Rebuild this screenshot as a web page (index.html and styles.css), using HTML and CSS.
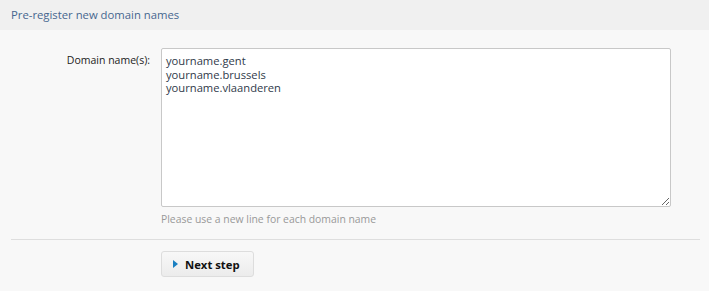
FILE: index.html
```html
<!DOCTYPE html>
<html lang="en">
<head>
  <meta charset="UTF-8" />
  <title>Pre-register new domain names</title>
  <link rel="stylesheet" href="styles.css">
</head>
<body>
  <div class="panel">
    <div class="panel-heading">Pre-register new domain names</div>
    <form class="panel-body" id="preregForm">
      <div class="form-row">
        <label for="domains">Domain name(s):</label>
        <div class="field">
          <textarea id="domains" spellcheck="true">yourname.gent
yourname.brussels
yourname.vlaanderen</textarea>
          <div class="help">Please use a new line for each domain name</div>
        </div>
      </div>
      <div class="form-actions">
        <button type="submit"><span class="arrow"></span>Next step</button>
      </div>
    </form>
  </div>
</body>
</html>
```

FILE: styles.css
```css
body {
  margin: 0;
  font-family: 'Open Sans', sans-serif;
  font-size: 12px;
  color: #333;
  background: #f8f8f8;
}

.panel-heading {
  height: 30px;
  line-height: 29px;
  padding-left: 11px;
  background: #f0f0f0;
  color: #46668f;
  font-size: 11.3px;
}

.panel-body {
  padding: 18px 9px 0 11px;
}

.form-row {
  display: flex;
  padding-bottom: 13px;
  border-bottom: 1px solid #dedede;
}

.form-row label {
  width: 139px;
  text-align: right;
  padding-top: 5px;
  margin-right: 11px;
  color: #222;
  font-size: 10.5px;
}

.field {
  display: flex;
  flex-direction: column;
}

textarea {
  width: 510px;
  height: 159px;
  box-sizing: border-box;
  border: 1px solid #c8c8c8;
  border-radius: 2px;
  padding: 5px 4px 3px;
  font-family: 'Open Sans', sans-serif;
  font-size: 11.2px;
  line-height: 13.5px;
  color: #2f3a4a;
  background: #fff;
  resize: both;
  outline: none;
}

.help {
  margin-top: 5px;
  color: #999;
  font-size: 10.4px;
}

.form-actions {
  padding: 11px 0 14px 150px;
}

button {
  display: flex;
  align-items: center;
  height: 26px;
  padding: 0 13px 0 11px;
  border: 1px solid #ddd;
  border-radius: 3px;
  background: linear-gradient(#f8f8f8, #ececec);
  font-family: 'Open Sans', sans-serif;
  font-size: 11.3px;
  font-weight: bold;
  color: #111;
  cursor: pointer;
}

.arrow {
  width: 0;
  height: 0;
  border-top: 4px solid transparent;
  border-bottom: 4px solid transparent;
  border-left: 5px solid #1a7fc1;
  margin-right: 7px;
}
```
